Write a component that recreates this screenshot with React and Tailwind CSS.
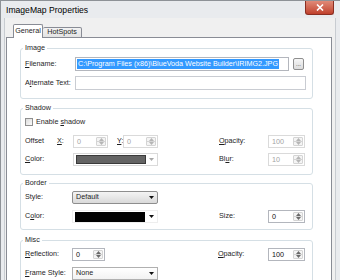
import React from 'react';

function Tri({ up, color = '#333' }) {
  return (
    <svg width="5" height="3" viewBox="0 0 5 3">
      <path d={up ? 'M0 3 L2.5 0 L5 3 Z' : 'M0 0 L5 0 L2.5 3 Z'} fill={color} />
    </svg>
  );
}

function Group({ title, className, children }) {
  return (
    <fieldset className={`rounded-[3px] border border-[#d5dfe5] pl-[4px] pr-[6px] ${className}`}>
      <legend className="-ml-[2px] px-[2px] leading-[10px]">{title}</legend>
      {children}
    </fieldset>
  );
}

function Spin({ value, w, disabled }) {
  return (
    <div
      className={`flex h-[13px] ${w} border bg-white ${
        disabled ? 'border-[#dadada] text-[#a3a3a3]' : 'border-[#b3b6bd] text-[#111]'
      }`}
    >
      <span className="flex-1 pl-[3px] leading-[11px]">{value}</span>
      <div className="my-[1px] mr-[1px] flex w-[10px] flex-col rounded-[1px] border border-[#d4d4d4] bg-[#f4f4f4]">
        <div className="flex flex-1 items-center justify-center border-b border-[#d4d4d4]">
          <Tri up color={disabled ? '#b5b5b5' : '#6a6a6a'} />
        </div>
        <div className="flex flex-1 items-center justify-center">
          <Tri color={disabled ? '#b5b5b5' : '#6a6a6a'} />
        </div>
      </div>
    </div>
  );
}

function Label({ k, rest, w }) {
  return (
    <span className={`${w} shrink-0 whitespace-nowrap`}>
      <u>{k}</u>
      {rest}
    </span>
  );
}

export default function App() {
  return (
    <div className="flex h-[280px] w-[340px] flex-col overflow-hidden border-l border-t border-[#8e9297] bg-[#e9ebee] font-['Liberation_Sans',Arial,sans-serif] text-[7.2px] text-[#1e1e1e]">
      {/* Title bar */}
      <div className="flex h-[17px] shrink-0 items-start justify-between">
        <span className="pl-[5px] pt-[4px] text-[8.6px] leading-[10px] text-black">ImageMap Properties</span>
        <div className="mr-[6px] flex h-[14px] w-[29px] items-center justify-center rounded-b-[3px] border border-t-0 border-[#8a2e22] bg-gradient-to-b from-[#e08a78] to-[#c0402c]">
          <svg width="8" height="7" viewBox="0 0 8 7">
            <path d="M1 0.5 L7 6.5 M7 0.5 L1 6.5" stroke="#fff" strokeWidth="1.6" />
          </svg>
        </div>
      </div>

      {/* Client area */}
      <div className="ml-[3px] mr-[4px] flex flex-1 flex-col border-l border-r border-[#c8ccd1] bg-[#f0f0f0] pl-[1px] pr-[3px]">
        {/* Tabs */}
        <div className="mt-[6px] flex items-end pl-[7px]">
          <div className="relative z-10 flex h-[14px] w-[30px] items-center justify-center rounded-t-[2px] border border-b-0 border-[#898c95] bg-white">
            General
          </div>
          <div className="flex h-[11px] w-[39px] items-center justify-center rounded-t-[2px] border border-l-0 border-[#898c95] bg-gradient-to-b from-[#f2f2f2] to-[#e3e3e3]">
            HotSpots
          </div>
        </div>

        {/* Panel */}
        <div className="-mt-px flex flex-1 flex-col border border-b-0 border-[#898c95] bg-white pl-[13px] pr-[18px] pt-[5px]">
          <Group title="Image" className="pb-[8px] pt-[4px]">
            <div className="flex h-[14px] items-center">
              <Label k="F" rest="ilename:" w="w-[50px]" />
              <div className="flex h-[14px] flex-1 items-center border border-[#b3b6bd] bg-white pl-[1px]">
                <span className="whitespace-nowrap bg-[#3399ff] px-[1px] leading-[10px] text-white">
                  C:\Program Files (x86)\BlueVoda Website Builder\IRIMG2.JPG
                </span>
              </div>
              <div className="ml-[4px] mr-[2px] flex h-[12px] w-[11px] items-end justify-center rounded-[2px] border border-[#8e8e8e] bg-gradient-to-b from-[#f6f6f6] to-[#dcdcdc] pb-[2px] text-[6px] leading-[6px]">
                ...
              </div>
            </div>
            <div className="mt-[5px] flex h-[14px] items-center">
              <span className="w-[50px] shrink-0 whitespace-nowrap">
                A<u>l</u>ternate Text:
              </span>
              <div className="h-[14px] flex-1 border border-[#c9ccd2] bg-white" />
            </div>
          </Group>

          <Group title="Shadow" className="mt-[4px] pb-[8px] pt-[4px]">
            <div className="flex h-[10px] items-center">
              <div className="h-[8px] w-[8px] border border-[#8f8f8f] bg-gradient-to-br from-[#dcdcdc] to-[#fafafa]" />
              <span className="ml-[3px]">
                Enable <u>s</u>hadow
              </span>
            </div>
            <div className="mt-[8px] flex h-[13px] items-center">
              <span className="w-[32px] shrink-0">Offset</span>
              <Label k="X" rest=":" w="w-[16px]" />
              <Spin value="0" w="w-[35px]" disabled />
              <span className="ml-[9px] w-[6px] shrink-0">
                <u>Y</u>:
              </span>
              <Spin value="0" w="w-[35px]" disabled />
              <Label k="O" rest="pacity:" w="ml-[61px] w-[49px]" />
              <Spin value="100" w="w-[37px]" disabled />
            </div>
            <div className="mt-[5px] flex h-[13px] items-center">
              <Label k="C" rest="olor:" w="w-[48px]" />
              <div className="flex h-[13px] w-[85px] items-center border border-[#dadada] bg-white pl-[2px]">
                <div className="h-[9px] w-[70px] border border-[#3a3a3a] bg-[#646464]" />
                <div className="flex flex-1 justify-center">
                  <Tri color="#a8a8a8" />
                </div>
              </div>
              <span className="ml-[61px] w-[49px] shrink-0">
                Bl<u>u</u>r:
              </span>
              <Spin value="10" w="w-[37px]" disabled />
            </div>
          </Group>

          <Group title="Border" className="mt-[3px] pb-[6px] pt-[3px]">
            <div className="flex h-[13px] items-center">
              <span className="w-[47px] shrink-0">Style:</span>
              <div className="flex h-[13px] w-[86px] items-center rounded-[2px] border border-[#8e8e8e] bg-gradient-to-b from-[#f4f4f4] to-[#dadada] pl-[3px]">
                <span className="flex-1">Default</span>
                <span className="mr-[3px]">
                  <Tri color="#111" />
                </span>
              </div>
            </div>
            <div className="mt-[6px] flex h-[13px] items-center">
              <span className="w-[47px] shrink-0">
                C<u>o</u>lor:
              </span>
              <div className="flex h-[13px] w-[86px] items-center border border-[#eeeeee] bg-white pl-[2px]">
                <div className="h-[10px] w-[70px] bg-black" />
                <div className="flex flex-1 justify-center">
                  <Tri color="#111" />
                </div>
              </div>
              <span className="ml-[61px] w-[49px] shrink-0">Size:</span>
              <Spin value="0" w="w-[37px]" />
            </div>
          </Group>

          <Group title="Misc" className="mt-[5px] pb-[6px] pt-[3px]">
            <div className="flex h-[13px] items-center">
              <Label k="R" rest="eflection:" w="w-[47px]" />
              <Spin value="0" w="w-[33px]" />
              <Label k="O" rest="pacity:" w="ml-[113px] w-[50px]" />
              <Spin value="100" w="w-[37px]" />
            </div>
            <div className="mt-[6px] flex h-[13px] items-center">
              <Label k="F" rest="rame Style:" w="w-[47px]" />
              <div className="flex h-[13px] w-[86px] items-center border border-[#b0b0b0] bg-gradient-to-b from-white to-[#f2f2f2] pl-[3px]">
                <span className="flex-1">None</span>
                <span className="mr-[3px]">
                  <Tri color="#111" />
                </span>
              </div>
            </div>
          </Group>
        </div>
      </div>
    </div>
  );
}
